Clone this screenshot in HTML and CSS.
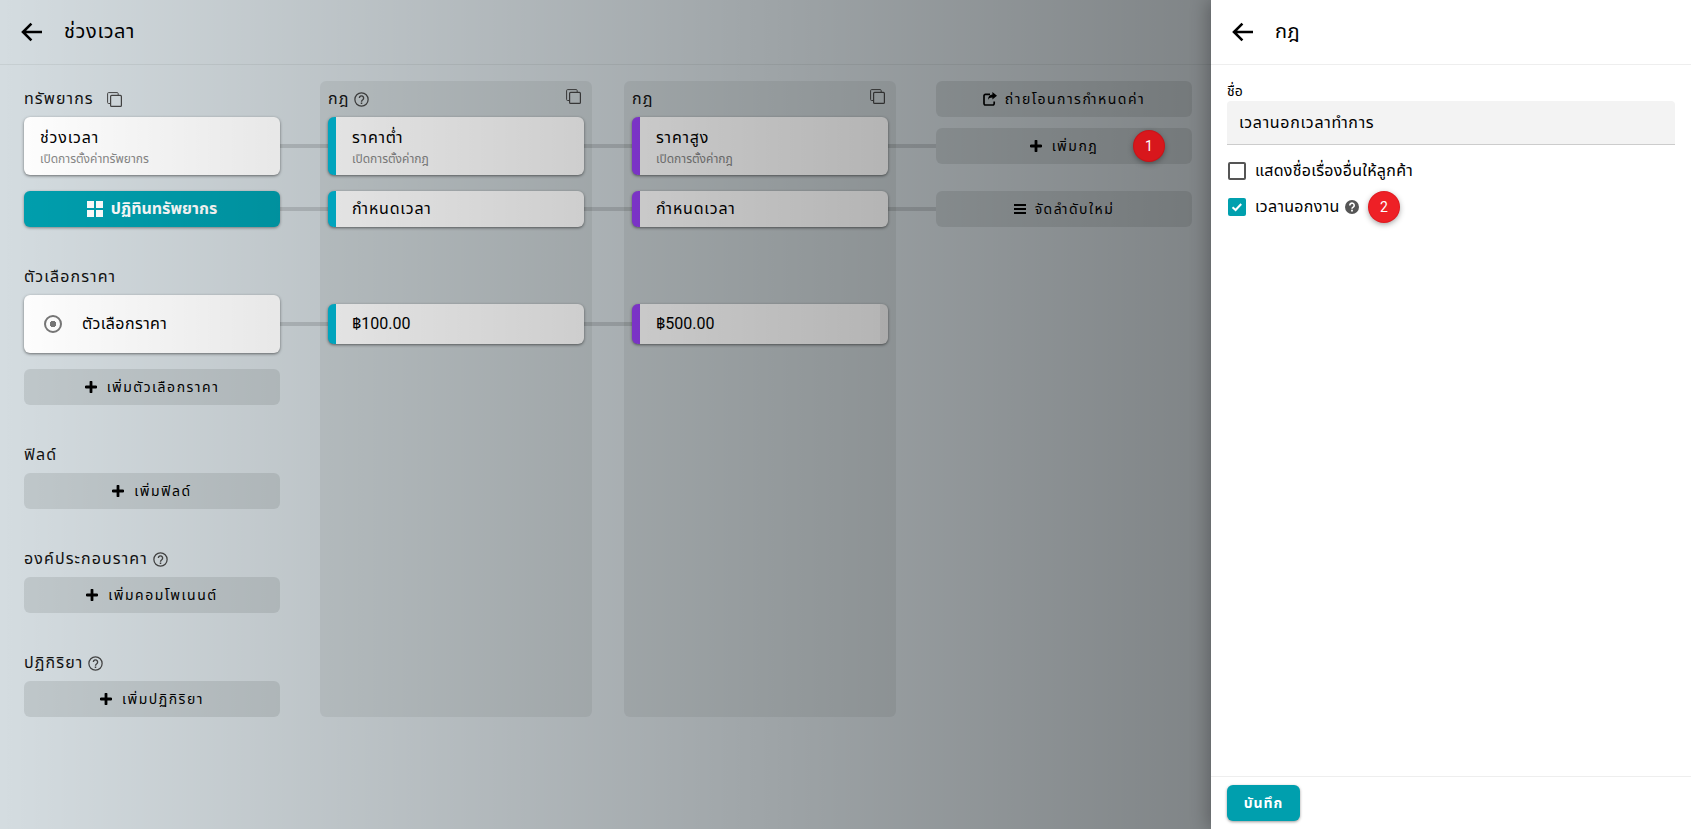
FILE: index.html
```html
<!DOCTYPE html>
<html lang="th">
<head>
<meta charset="utf-8">
<title>ช่วงเวลา</title>
<link rel="stylesheet" href="styles.css">
</head>
<body>
<svg class="sprite" width="0" height="0" aria-hidden="true">
  <symbol id="i-back" viewBox="0 0 22 20"><path d="M21 10H2.6M10.4 1.6 2 10l8.4 8.4" fill="none" stroke="currentColor" stroke-width="2.6"/></symbol>
  <symbol id="i-copy" viewBox="0 0 15 15"><path d="M3 11.5H1.6a1 1 0 0 1-1-1V1.6a1 1 0 0 1 1-1h8.6a1 1 0 0 1 1 1V3" fill="none" stroke="currentColor" stroke-width="1"/><rect x="3.6" y="3.4" width="10.8" height="11" rx="1" fill="none" stroke="currentColor" stroke-width="1.2"/></symbol>
  <symbol id="i-help" viewBox="0 0 24 24"><circle cx="12" cy="12" r="10.6" fill="none" stroke="currentColor" stroke-width="2"/><path d="M8.6 9.6a3.4 3.4 0 1 1 5.4 2.8c-1.3.9-2 1.5-2 3" fill="none" stroke="currentColor" stroke-width="2.2"/><rect x="10.8" y="16.8" width="2.4" height="2.4" fill="currentColor"/></symbol>
  <symbol id="i-plus" viewBox="0 0 12 12"><path d="M6 1v10M1 6h10" fill="none" stroke="currentColor" stroke-width="2.8" stroke-linecap="round"/></symbol>
  <symbol id="i-grid" viewBox="0 0 16 16"><path d="M0 0h7v7H0zM9 0h7v7H9zM0 9h7v7H0zM9 9h7v7H9z" fill="currentColor"/></symbol>
  <symbol id="i-share" viewBox="0 0 14 14"><path d="M7 2.4H2.4a1.4 1.4 0 0 0-1.4 1.4v7.8A1.4 1.4 0 0 0 2.4 13h7.4a1.4 1.4 0 0 0 1.4-1.4V9.4" fill="none" stroke="currentColor" stroke-width="1.7"/><path d="M9.4 0 14 3.8 9.4 7.6V5.5C7.2 5.5 5.8 6.2 5 8c0-3.2 1.6-5.1 4.4-5.4z" fill="currentColor"/></symbol>
  <symbol id="i-bars" viewBox="0 0 12 12"><path d="M0 1h12v2H0zM0 5h12v2H0zM0 9h12v2H0z" fill="currentColor"/></symbol>
  <symbol id="i-qfill" viewBox="0 0 14 14"><circle cx="7" cy="7" r="7" fill="currentColor"/><path d="M4.8 5.4A2.2 2.2 0 1 1 8.2 7.2C7.4 7.7 7 8 7 8.8" fill="none" stroke="#fff" stroke-width="1.6"/><rect x="6.1" y="9.7" width="1.8" height="1.8" fill="#fff"/></symbol>
</svg>

<div class="app">
  <div class="page">
    <header class="topbar">
      <svg class="back"><use href="#i-back"/></svg>
      <h1 class="topbar-title">ช่วงเวลา</h1>
    </header>
    <main class="board">
      <section class="col-resources">
        <div class="heading">ทรัพยากร <svg class="ico-copy copy-near"><use href="#i-copy"/></svg></div>
        <div class="card link">
          <div class="card-title">ช่วงเวลา</div>
          <div class="card-sub">เปิดการตั้งค่าทรัพยากร</div>
        </div>
        <button class="primary link gap"><svg class="ico-grid"><use href="#i-grid"/></svg>ปฏิทินทรัพยากร</button>

        <div class="heading section">ตัวเลือกราคา</div>
        <div class="card card-row link">
          <span class="radio"></span>
          <span class="card-title">ตัวเลือกราคา</span>
        </div>
        <button class="ghost gap"><svg class="ico-plus"><use href="#i-plus"/></svg>เพิ่มตัวเลือกราคา</button>

        <div class="heading section">ฟิลด์</div>
        <button class="ghost"><svg class="ico-plus"><use href="#i-plus"/></svg>เพิ่มฟิลด์</button>

        <div class="heading section">องค์ประกอบราคา <svg class="ico-help"><use href="#i-help"/></svg></div>
        <button class="ghost"><svg class="ico-plus"><use href="#i-plus"/></svg>เพิ่มคอมโพเนนต์</button>

        <div class="heading section">ปฏิกิริยา <svg class="ico-help"><use href="#i-help"/></svg></div>
        <button class="ghost"><svg class="ico-plus"><use href="#i-plus"/></svg>เพิ่มปฏิกิริยา</button>
      </section>

      <section class="rule-col teal">
        <div class="heading">กฎ <svg class="ico-help"><use href="#i-help"/></svg><svg class="ico-copy copy-end"><use href="#i-copy"/></svg></div>
        <div class="card rule link">
          <div class="card-title">ราคาต่ำ</div>
          <div class="card-sub">เปิดการตั้งค่ากฎ</div>
        </div>
        <div class="card rule slim link gap">กำหนดเวลา</div>
        <div class="card rule price link">฿100.00</div>
      </section>

      <section class="rule-col purple">
        <div class="heading">กฎ <svg class="ico-copy copy-end"><use href="#i-copy"/></svg></div>
        <div class="card rule link">
          <div class="card-title">ราคาสูง</div>
          <div class="card-sub">เปิดการตั้งค่ากฎ</div>
        </div>
        <div class="card rule slim link gap">กำหนดเวลา</div>
        <div class="card rule price striped">฿500.00</div>
      </section>

      <section class="col-actions">
        <button class="ghost"><svg class="ico-share"><use href="#i-share"/></svg>ถ่ายโอนการกำหนดค่า</button>
        <button class="ghost add-rule"><svg class="ico-plus"><use href="#i-plus"/></svg>เพิ่มกฎ<span class="badge badge-one">1</span></button>
        <button class="ghost reorder"><svg class="ico-bars"><use href="#i-bars"/></svg>จัดลำดับใหม่</button>
      </section>
    </main>
    <div class="dim"></div>
  </div>

  <aside class="panel">
    <header class="topbar panel-bar">
      <svg class="back"><use href="#i-back"/></svg>
      <h2 class="topbar-title">กฎ</h2>
    </header>
    <div class="panel-body">
      <label class="field-label">ชื่อ</label>
      <div class="input">เวลานอกเวลาทำการ</div>
      <div class="check-row first"><span class="box"></span>แสดงชื่อเรื่องอื่นให้ลูกค้า</div>
      <div class="check-row">
        <span class="box on"><svg viewBox="0 0 18 18" width="18" height="18"><path d="M4.5 9.2 7.6 12l5.6-6" fill="none" stroke="#fff" stroke-width="2"/></svg></span>
        เวลานอกงาน <svg class="ico-qfill"><use href="#i-qfill"/></svg>
        <span class="badge badge-two">2</span>
      </div>
    </div>
    <footer class="panel-foot">
      <button class="save">บันทึก</button>
    </footer>
  </aside>
</div>
</body>
</html>
```
FILE: styles.css
```css
* { box-sizing: border-box; }
html, body { margin: 0; height: 100%; overflow: hidden; }
body {
  font-family: Roboto, "Noto Sans", "Noto Sans Thai", "Liberation Sans", sans-serif;
  font-size: 16px;
  color: #111;
  background: #d4dce0;
}
.sprite { position: absolute; }
.app { display: flex; width: 1691px; height: 829px; }
.page { position: relative; flex: 0 0 1211px; background: #d4dce0; overflow: hidden; }
.dim {
  position: absolute;
  inset: 0;
  background: linear-gradient(90deg, rgba(0,0,0,0) 0, rgba(0,0,0,.4) 100%);
  pointer-events: none;
}
.topbar {
  height: 65px;
  display: flex;
  align-items: center;
  padding-left: 21px;
  border-bottom: 1px solid rgba(0,0,0,.06);
}
.back { width: 22px; height: 20px; color: #000; flex: none; }
.topbar-title { margin: 0 0 0 21px; font-size: 20px; font-weight: 400; letter-spacing: .6px; color: #000; }
.board { display: flex; padding: 16px 0 0 24px; align-items: stretch; width: 1211px; }
.col-resources { width: 256px; flex: none; }
.rule-col {
  width: 272px;
  flex: none;
  margin-left: 40px;
  padding: 0 8px;
  border-radius: 6px;
  background: rgba(0,0,0,.06);
}
.rule-col + .rule-col { margin-left: 32px; }
.col-actions { width: 256px; flex: none; margin-left: 40px; }
.heading {
  position: relative;
  height: 36px;
  display: flex;
  align-items: center;
  gap: 5px;
  font-size: 16px;
  font-weight: 400;
  letter-spacing: 1.1px;
  color: #111;
}
.section { margin-top: 32px; }
.ico-copy { width: 15px; height: 15px; color: #444; flex: none; }
.copy-near { margin-left: 8px; }
.copy-end { position: absolute; right: 3px; top: 8px; }
.ico-help { width: 15px; height: 15px; color: #444; flex: none; }
.card {
  position: relative;
  height: 58px;
  padding: 8px 16px;
  background: #fff;
  border-radius: 6px;
  box-shadow: 0 1px 3px rgba(0,0,0,.5);
}
.card-title { font-size: 16px; font-weight: 400; letter-spacing: .8px; line-height: 26px; color: #000; }
.card-sub { font-size: 12px; color: #888; line-height: 17px; }
.card-row { display: flex; align-items: center; padding-left: 20px; }
.card-row .card-title { margin-left: 20px; letter-spacing: .4px; }
.radio {
  width: 18px; height: 18px; flex: none;
  border-radius: 50%;
  border: 2px solid #777;
  position: relative;
  background: radial-gradient(circle, #777 0 3px, transparent 3.5px);
}
.rule { border-left: 8px solid; }
.teal .rule { border-left-color: #00b8d4; }
.purple .rule { border-left-color: #9b40fa; }
.slim { height: 36px; padding: 0 16px; display: flex; align-items: center; font-weight: 400; letter-spacing: .8px; color: #000; }
.gap { margin-top: 16px; }
.price {
  height: 40px;
  margin-top: 77px;
  padding: 0 16px;
  display: flex;
  align-items: center;
  font-size: 16px;
  font-weight: 400;
  letter-spacing: 0;
  color: #000;
}
.striped::before {
  content: "";
  position: absolute;
  right: 0; top: 0; bottom: 0;
  width: 8px;
  background: rgba(0,0,0,.05);
  border-radius: 0 6px 6px 0;
}
.link::after {
  content: "";
  position: absolute;
  left: 100%;
  top: 50%;
  width: 48px;
  height: 4px;
  margin-top: -2px;
  background: rgba(0,0,0,.13);
}
button { font-family: inherit; border: 0; cursor: pointer; display: flex; width: 100%; align-items: center; justify-content: center; }
.primary {
  position: relative;
  height: 36px;
  color: #fff;
  background: #009fae;
  border-radius: 6px;
  font-size: 16px;
  font-weight: 700;
  letter-spacing: 0;
  box-shadow: 0 1px 3px rgba(0,0,0,.4);
}
.ico-grid { width: 16px; height: 16px; margin-right: 8px; }
.ghost {
  position: relative;
  height: 36px;
  background: rgba(0,0,0,.09);
  border-radius: 6px;
  color: #000;
  font-size: 14px;
  font-weight: 400;
  letter-spacing: 1.5px;
}
.ico-plus { width: 12px; height: 12px; margin-right: 10px; color: #000; }
.ico-share { width: 14px; height: 14px; margin-right: 8px; }
.ico-bars { width: 12px; height: 12px; margin-right: 9px; }
.add-rule { margin-top: 11px; }
.reorder { margin-top: 27px; }
.badge {
  position: absolute;
  z-index: 2;
  width: 30px; height: 30px;
  border-radius: 50%;
  display: flex; align-items: center; justify-content: center;
  color: #fff;
  font-size: 14px;
  font-weight: 400;
  letter-spacing: 0;
  background: #ee2026;
  box-shadow: 0 0 0 1px #e01a20, 0 2px 6px rgba(0,0,0,.45);
}
.badge-one { left: 198px; top: 3px; background: #d8171c; box-shadow: 0 0 0 1px #c81419, 0 2px 6px rgba(0,0,0,.45); }
.badge-two { left: 142px; top: -6px; }

.panel {
  flex: 0 0 480px;
  background: #fff;
  display: flex;
  flex-direction: column;
  box-shadow: -4px 0 16px rgba(0,0,0,.25);
  position: relative;
}
.panel-bar { border-bottom-color: #eee; }
.panel-body { flex: 1; padding: 17px 16px 0; }
.field-label { display: block; font-size: 14px; font-weight: 400; line-height: 19px; color: #000; }
.input {
  height: 44px;
  padding: 0 12px;
  display: flex;
  align-items: center;
  background: #f3f3f3;
  border-bottom: 1px solid #ccc;
  border-radius: 4px 4px 0 0;
  font-size: 16px;
  font-weight: 400;
  letter-spacing: .7px;
  color: #000;
}
.check-row {
  position: relative;
  display: flex;
  align-items: center;
  height: 18px;
  margin-top: 18px;
  padding-left: 1px;
  font-size: 16px;
  font-weight: 400;
  letter-spacing: .3px;
  color: #000;
}
.check-row.first { margin-top: 17px; }
.box {
  width: 18px; height: 18px;
  margin-right: 9px;
  flex: none;
  border: 2px solid #555;
  border-radius: 2px;
}
.box.on { border: 0; background: #00a0ae; }
.box.on svg { display: block; }
.ico-qfill { width: 14px; height: 14px; margin-left: 5px; color: #555; }
.panel-foot { height: 53px; border-top: 1px solid #eee; padding: 8px 16px 0; }
.save {
  width: 73px; height: 36px;
  background: #009fae;
  color: #fff;
  border-radius: 6px;
  font-size: 14px;
  font-weight: 700;
  letter-spacing: 1px;
  box-shadow: 0 1px 3px rgba(0,0,0,.4);
}
```
